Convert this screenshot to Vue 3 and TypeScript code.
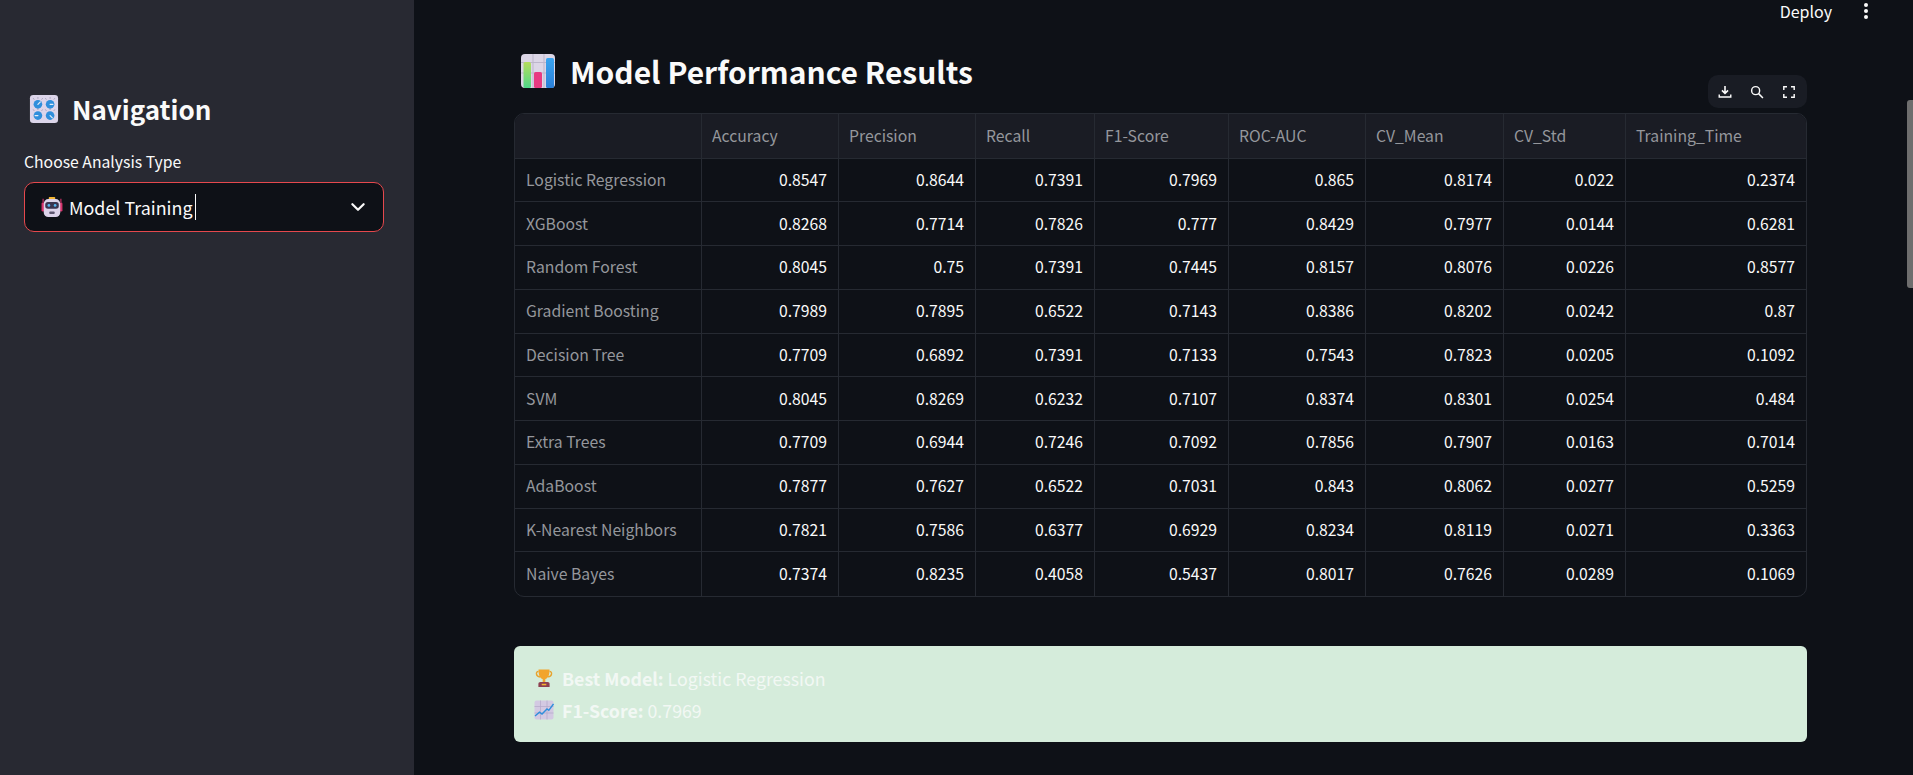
<template>
  <div class="app">
    <aside class="sidebar">
      <h2 class="nav-title">
        <svg class="emoji-nav" viewBox="0 0 32 32">
          <rect x="1" y="1" width="30" height="30" rx="3.5" fill="#dcd5ea" />
          <g v-for="k in knobs" :key="k.x + '-' + k.y">
            <circle :cx="k.x" :cy="k.y" r="4.6" fill="#2f8fdc" />
            <line :x1="k.x" :y1="k.y" :x2="k.x + k.dx" :y2="k.y + k.dy" stroke="#e6eef8" stroke-width="1.3" stroke-linecap="round" />
            <path :d="`M${k.x - 5} ${k.y - 6.5}l1 1.4M${k.x} ${k.y - 7.6}v1.6M${k.x + 5} ${k.y - 6.5}l-1 1.4`" stroke="#8f8aa6" stroke-width=".8" fill="none" />
          </g>
        </svg>
        <span>Navigation</span>
      </h2>
      <label class="field-label">Choose Analysis Type</label>
      <div class="select">
        <svg class="emoji-robot" viewBox="0 0 24 24">
          <rect x="0.6" y="7" width="3.4" height="10" rx="1.4" fill="#d6336c" />
          <rect x="20" y="7" width="3.4" height="10" rx="1.4" fill="#d6336c" />
          <path d="M2.3 7V3M21.7 7V3" stroke="#d6336c" stroke-width="1.2" />
          <rect x="8.5" y="1" width="7" height="3.4" rx="1" fill="#f2b632" />
          <rect x="3" y="3.4" width="18" height="19.6" rx="5" fill="#dcd3ea" />
          <rect x="4.6" y="6.6" width="14.8" height="7.4" rx="3" fill="#3a3550" />
          <circle cx="8.6" cy="10.3" r="1.5" fill="#56b4f0" />
          <circle cx="15.4" cy="10.3" r="1.5" fill="#56b4f0" />
          <rect x="9" y="17" width="6" height="2.6" rx="1" fill="#5d5670" />
        </svg>
        <span class="select-value">Model Training</span>
        <span class="caret"></span>
        <svg class="chevron" viewBox="0 0 16 16">
          <path d="M3 5.6 8 10.4l5-4.8" fill="none" stroke="#fafafa" stroke-width="2" stroke-linecap="round" stroke-linejoin="round" />
        </svg>
      </div>
    </aside>

    <main class="main">
      <header class="topbar">
        <span class="deploy">Deploy</span>
        <svg class="dots" viewBox="0 0 6 18">
          <circle cx="3" cy="3" r="2" fill="#fafafa" />
          <circle cx="3" cy="9" r="2" fill="#fafafa" />
          <circle cx="3" cy="15" r="2" fill="#fafafa" />
        </svg>
      </header>

      <h1 class="title">
        <svg class="emoji-chart" viewBox="0 0 36 36">
          <defs>
            <linearGradient id="barGreen" x1="0" y1="0" x2="0" y2="1">
              <stop offset="0" stop-color="#b5dc5c" />
              <stop offset="1" stop-color="#4fd98a" />
            </linearGradient>
            <linearGradient id="barBlue" x1="0" y1="0" x2="0" y2="1">
              <stop offset="0" stop-color="#3aa5f0" />
              <stop offset="1" stop-color="#2a7fd8" />
            </linearGradient>
          </defs>
          <rect x="1" y="1" width="34" height="34" rx="4" fill="#dcd6e6" />
          <path d="M1 9.5h34M1 20h34M13 1v34M24 1v34" stroke="#bdb6cb" stroke-width="1" />
          <rect x="3.5" y="9" width="7.5" height="26" rx="1.6" fill="url(#barGreen)" />
          <rect x="14" y="19" width="8" height="16" rx="1.6" fill="#e83a82" />
          <rect x="26" y="5" width="8" height="30" rx="1.6" fill="url(#barBlue)" />
        </svg>
        <span>Model Performance Results</span>
      </h1>

      <div class="frame">
        <div class="toolbar">
          <svg viewBox="0 0 20 20">
            <path d="M10 2.5v9M6.2 8 10 11.8 13.8 8" fill="none" stroke="#fafafa" stroke-width="2" />
            <path d="M2.8 13v3.2h14.4V13" fill="none" stroke="#fafafa" stroke-width="1.8" />
          </svg>
          <svg viewBox="0 0 20 20">
            <circle cx="8.3" cy="8.3" r="5" fill="none" stroke="#fafafa" stroke-width="1.8" />
            <path d="m12 12 5.4 5.4" stroke="#fafafa" stroke-width="1.9" />
          </svg>
          <svg viewBox="0 0 20 20">
            <path d="M3.5 7.5v-4h4M12.5 3.5h4v4M16.5 12.5v4h-4M7.5 16.5h-4v-4" fill="none" stroke="#fafafa" stroke-width="1.8" />
          </svg>
        </div>
        <div class="table">
          <div class="cell head"></div>
          <div v-for="c in columns" :key="c" class="cell head">{{ c }}</div>
          <template v-for="r in rows" :key="r.name">
            <div class="cell index">{{ r.name }}</div>
            <div v-for="(v, i) in r.values" :key="i" class="cell num">{{ v }}</div>
          </template>
        </div>
      </div>

      <section class="success">
        <p>
          <svg class="emoji-small" viewBox="0 0 20 20">
            <path d="M4.5 3.5C1.6 3.2 1.4 8.4 6 9M15.5 3.5c2.9-.3 3.1 4.9-1.5 5.4" fill="none" stroke="#e8a32e" stroke-width="1.4" />
            <path d="M4.5 1.5h11c0 6-1.4 8.6-4.2 9.6v3h-2.6v-3C5.900 10.100 4.500 7.500 4.500 1.500z" fill="#f2a42c" />
            <path d="M4.400 16c0-1.200.8-1.900 2-1.900h7.200c1.200 0 2 .7 2 1.900v3H4.400z" fill="#8d3f4f" />
            <rect x="7.700" y="15.800" width="4.600" height="1.500" fill="#f2b632" />
          </svg>
          <strong>Best Model:</strong> Logistic Regression
        </p>
        <p>
          <svg class="emoji-small" viewBox="0 0 20 20">
            <rect x="0.500" y="0.500" width="19" height="19" rx="2" fill="#d3c9e2" />
            <path d="M.5 6.500h19M.5 13h19M6.500.5v19M13 .5v19" stroke="#b3a8c9" stroke-width=".7" />
            <path d="m1 16 4.500-3.800 2.500 1.800 5-5 1.800 1.300L19.500 4" fill="none" stroke="#2f8fdc" stroke-width="1.400" />
          </svg>
          <strong>F1-Score:</strong> 0.7969
        </p>
      </section>

      <div class="scroll-thumb"></div>
    </main>
  </div>
</template>

<script setup lang="ts">
interface ModelRow {
  name: string;
  values: string[];
}

// 每列宽度（含右边框）
const colWidths = [187, 137, 137, 119, 134, 137, 138, 122, 180];
const gridColumns = colWidths.map((w) => `${w}px`).join(' ');

const columns = ['Accuracy', 'Precision', 'Recall', 'F1-Score', 'ROC-AUC', 'CV_Mean', 'CV_Std', 'Training_Time'];

const rows: ModelRow[] = [
  { name: 'Logistic Regression', values: ['0.8547', '0.8644', '0.7391', '0.7969', '0.865', '0.8174', '0.022', '0.2374'] },
  { name: 'XGBoost', values: ['0.8268', '0.7714', '0.7826', '0.777', '0.8429', '0.7977', '0.0144', '0.6281'] },
  { name: 'Random Forest', values: ['0.8045', '0.75', '0.7391', '0.7445', '0.8157', '0.8076', '0.0226', '0.8577'] },
  { name: 'Gradient Boosting', values: ['0.7989', '0.7895', '0.6522', '0.7143', '0.8386', '0.8202', '0.0242', '0.87'] },
  { name: 'Decision Tree', values: ['0.7709', '0.6892', '0.7391', '0.7133', '0.7543', '0.7823', '0.0205', '0.1092'] },
  { name: 'SVM', values: ['0.8045', '0.8269', '0.6232', '0.7107', '0.8374', '0.8301', '0.0254', '0.484'] },
  { name: 'Extra Trees', values: ['0.7709', '0.6944', '0.7246', '0.7092', '0.7856', '0.7907', '0.0163', '0.7014'] },
  { name: 'AdaBoost', values: ['0.7877', '0.7627', '0.6522', '0.7031', '0.843', '0.8062', '0.0277', '0.5259'] },
  { name: 'K-Nearest Neighbors', values: ['0.7821', '0.7586', '0.6377', '0.6929', '0.8234', '0.8119', '0.0271', '0.3363'] },
  { name: 'Naive Bayes', values: ['0.7374', '0.8235', '0.4058', '0.5437', '0.8017', '0.7626', '0.0289', '0.1069'] },
];

const knobs = [
  { x: 9.5, y: 11, dx: 2.6, dy: -2.6 },
  { x: 22.5, y: 11, dx: 3, dy: 0 },
  { x: 9.5, y: 23, dx: -3, dy: 0 },
  { x: 22.5, y: 23, dx: 2.4, dy: 2.4 },
];
</script>

<style>
html,
body {
  margin: 0;
  height: 100%;
  overflow: hidden;
  background: #0e1117;
}
</style>

<style scoped>
.app {
  display: flex;
  height: 775px;
  font-family: 'Noto Sans CJK SC', 'Noto Sans', sans-serif;
  color: #fafafa;
  background: #0e1117;
}

.sidebar {
  width: 414px;
  flex: none;
  box-sizing: border-box;
  padding: 93px 30px 0 24px;
  background: #282932;
}

.nav-title {
  display: flex;
  align-items: center;
  margin: 0 0 25px 5px;
  height: 32px;
  font-size: 26px;
  font-weight: 600;
  line-height: 32px;
}

.emoji-nav {
  width: 30px;
  height: 30px;
  margin-right: 13px;
}

.field-label {
  display: block;
  height: 24px;
  font-size: 15.75px;
  line-height: 24px;
  margin-bottom: 8px;
}

.select {
  display: flex;
  align-items: center;
  box-sizing: border-box;
  width: 360px;
  height: 50px;
  padding: 0 16px 0 16px;
  border: 1.5px solid #e5484d;
  border-radius: 10px;
  background: #0e1117;
  font-size: 17.9px;
}

.emoji-robot {
  width: 22px;
  height: 22px;
  margin-right: 6px;
}

.select-value {
  line-height: 26px;
}

.caret {
  width: 1px;
  height: 26px;
  margin-left: 2px;
  background: #fafafa;
}

.chevron {
  width: 18px;
  height: 18px;
  margin-left: auto;
}

.main {
  position: relative;
  flex: 1;
  min-width: 0;
  padding: 0 106px 0 100px;
}

.topbar {
  display: flex;
  align-items: center;
  justify-content: flex-end;
  height: 22px;
  margin-right: -106px;
  padding-right: 44px;
}

.deploy {
  font-size: 16px;
  line-height: 22px;
  margin-right: 31px;
}

.dots {
  width: 6px;
  height: 18px;
}

.title {
  display: flex;
  align-items: center;
  height: 44px;
  margin: 27px 0 20px 6px;
  font-size: 30px;
  font-weight: 600;
  line-height: 44px;
}

.emoji-chart {
  width: 36px;
  height: 36px;
  margin-right: 14px;
}

.frame {
  position: relative;
}

.toolbar {
  position: absolute;
  right: 0;
  top: -38px;
  display: flex;
  align-items: center;
  justify-content: space-between;
  box-sizing: border-box;
  width: 99px;
  height: 33px;
  padding: 0 10px 0 9px;
  border-radius: 10px;
  background: #191c24;
}

.toolbar svg {
  width: 16px;
  height: 16px;
}

.table {
  display: grid;
  grid-template-columns: v-bind(gridColumns);
  grid-template-rows: 44.5px repeat(10, 43.75px);
  overflow: hidden;
  border: 1px solid #262a32;
  border-radius: 10px;
  font-size: 15.75px;
}

.cell {
  box-sizing: border-box;
  display: flex;
  align-items: center;
  min-width: 0;
  padding: 0 10px;
  border-right: 1px solid #262a32;
  border-bottom: 1px solid #262a32;
  line-height: 22px;
  white-space: nowrap;
}

.head {
  background: #1a1c24;
  color: #95979c;
}

.index {
  padding-left: 11px;
  color: #95979c;
}

.num {
  justify-content: flex-end;
  padding-right: 11px;
  color: #fafafa;
}

.table > .cell:nth-child(9n) {
  border-right: none;
}

.table > .cell:nth-last-child(-n + 9) {
  border-bottom: none;
}

.success {
  box-sizing: border-box;
  height: 96px;
  margin-top: 49px;
  padding: 16px 20px;
  border-radius: 6px;
  background: #d5ecdb;
  color: #f2f8f4;
  font-size: 17.75px;
  line-height: 32px;
}

.success p {
  margin: 0;
  display: flex;
  align-items: center;
  white-space: pre;
}

.success strong {
  font-weight: 600;
}

.emoji-small {
  width: 20px;
  height: 20px;
  margin-right: 8px;
}

.scroll-thumb {
  position: absolute;
  right: 0;
  top: 100px;
  width: 6px;
  height: 188px;
  border-radius: 3px 0 0 3px;
  background: #6e6e6e;
}
</style>
